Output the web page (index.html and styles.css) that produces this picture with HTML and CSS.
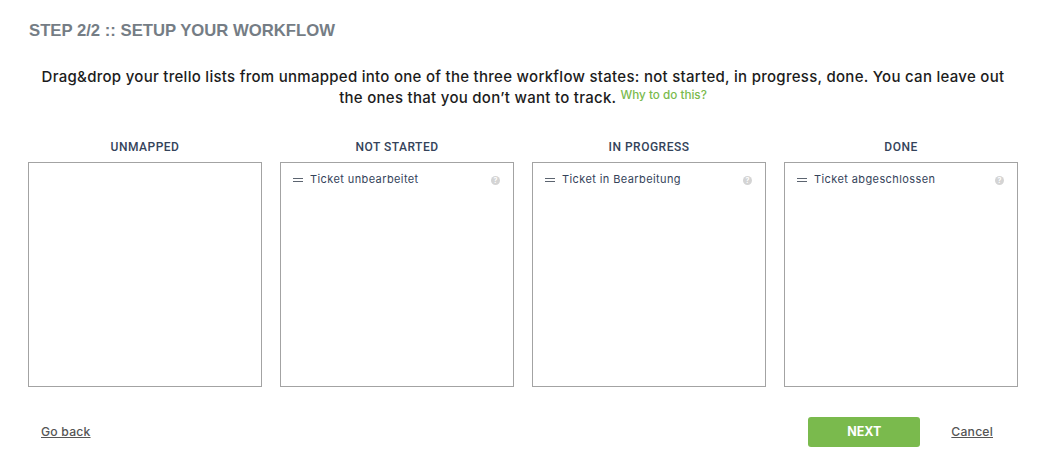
FILE: index.html
```html
<!DOCTYPE html>
<html lang="en">
<head>
  <meta charset="UTF-8">
  <title>Setup your workflow</title>
  <link rel="stylesheet" href="styles.css">
</head>
<body>

  <div class="wizard">
    <h2 class="step-title">STEP 2/2 :: SETUP YOUR WORKFLOW</h2>

    <p class="intro">
      Drag&amp;drop your trello lists from unmapped into one of the three workflow states: not started, in progress, done. You can leave out the ones that you don’t want to track.
      <a class="why" href="#">Why to do this?</a>
    </p>

    <div class="columns">
      <div class="column">
        <div class="column-title">UNMAPPED</div>
        <div class="column-box"></div>
      </div>

      <div class="column">
        <div class="column-title">NOT STARTED</div>
        <div class="column-box">
          <div class="list-item">
            <span class="handle"></span>
            <span class="list-name">Ticket unbearbeitet</span>
            <span class="help">?</span>
          </div>
        </div>
      </div>

      <div class="column">
        <div class="column-title">IN PROGRESS</div>
        <div class="column-box">
          <div class="list-item">
            <span class="handle"></span>
            <span class="list-name">Ticket in Bearbeitung</span>
            <span class="help">?</span>
          </div>
        </div>
      </div>

      <div class="column">
        <div class="column-title">DONE</div>
        <div class="column-box">
          <div class="list-item">
            <span class="handle"></span>
            <span class="list-name">Ticket abgeschlossen</span>
            <span class="help">?</span>
          </div>
        </div>
      </div>
    </div>

    <div class="actions">
      <a class="link" href="#">Go back</a>
      <div class="actions-right">
        <button class="btn-next">NEXT</button>
        <a class="link" href="#">Cancel</a>
      </div>
    </div>
  </div>

</body>
</html>
```

FILE: styles.css
```css
body {
  margin: 0;
  background: #fff;
  font-family: 'Inter', sans-serif;
}

.wizard {
  width: 990px;
  padding: 22px 0 0 28px;
}

.step-title {
  margin: 0;
  padding-left: 1px;
  font-family: 'Liberation Sans', sans-serif;
  font-size: 16.7px;
  line-height: 18px;
  font-weight: bold;
  color: #757d85;
}

.intro {
  margin: 26px 0 0;
  font-size: 15px;
  line-height: 21px;
  font-weight: 500;
  letter-spacing: 0.28px;
  color: #1c1c1c;
  text-align: center;
}

.why {
  position: relative;
  top: -4px;
  font-size: 11.7px;
  font-weight: 500;
  letter-spacing: 0;
  color: #7aba4d;
  text-decoration: none;
}

.columns {
  display: flex;
  gap: 18px;
  margin-top: 28px;
}

.column {
  width: 234px;
}

.column-title {
  box-sizing: border-box;
  height: 24px;
  padding-top: 1px;
  font-family: 'Roboto', sans-serif;
  font-size: 12px;
  line-height: 17px;
  font-weight: 500;
  letter-spacing: 0.5px;
  color: #34435a;
  text-align: center;
}

.column-box {
  box-sizing: border-box;
  height: 225px;
  border: 1px solid #a3a3a3;
}

.list-item {
  display: flex;
  align-items: center;
  height: 15px;
  padding: 8px 13px 0 12px;
  font-size: 11px;
  color: #34435a;
}

.handle {
  width: 10px;
  height: 2px;
  margin-top: 3px;
  margin-right: 7px;
  border-top: 1px solid #5c6470;
  border-bottom: 1px solid #5c6470;
}

.list-name {
  flex: 1;
  letter-spacing: 0.4px;
}

.help {
  width: 9px;
  height: 9px;
  margin-top: 4px;
  border-radius: 50%;
  background: #d4d4d4;
  color: #fff;
  font-size: 7px;
  line-height: 9px;
  font-weight: 700;
  text-align: center;
}

.actions {
  display: flex;
  justify-content: space-between;
  align-items: center;
  margin-top: 30px;
  padding: 0 25px 0 13px;
}

.actions-right {
  display: flex;
  align-items: center;
  gap: 31px;
}

.link {
  margin-bottom: 2px;
  font-size: 12.2px;
  font-weight: 500;
  letter-spacing: 0.2px;
  color: #555;
}

.btn-next {
  width: 112px;
  height: 30px;
  padding: 0 0 2px;
  border: none;
  border-radius: 3px;
  background: #7aba4d;
  color: #fff;
  font-family: 'Inter', sans-serif;
  font-size: 12.5px;
  font-weight: 700;
}
```
